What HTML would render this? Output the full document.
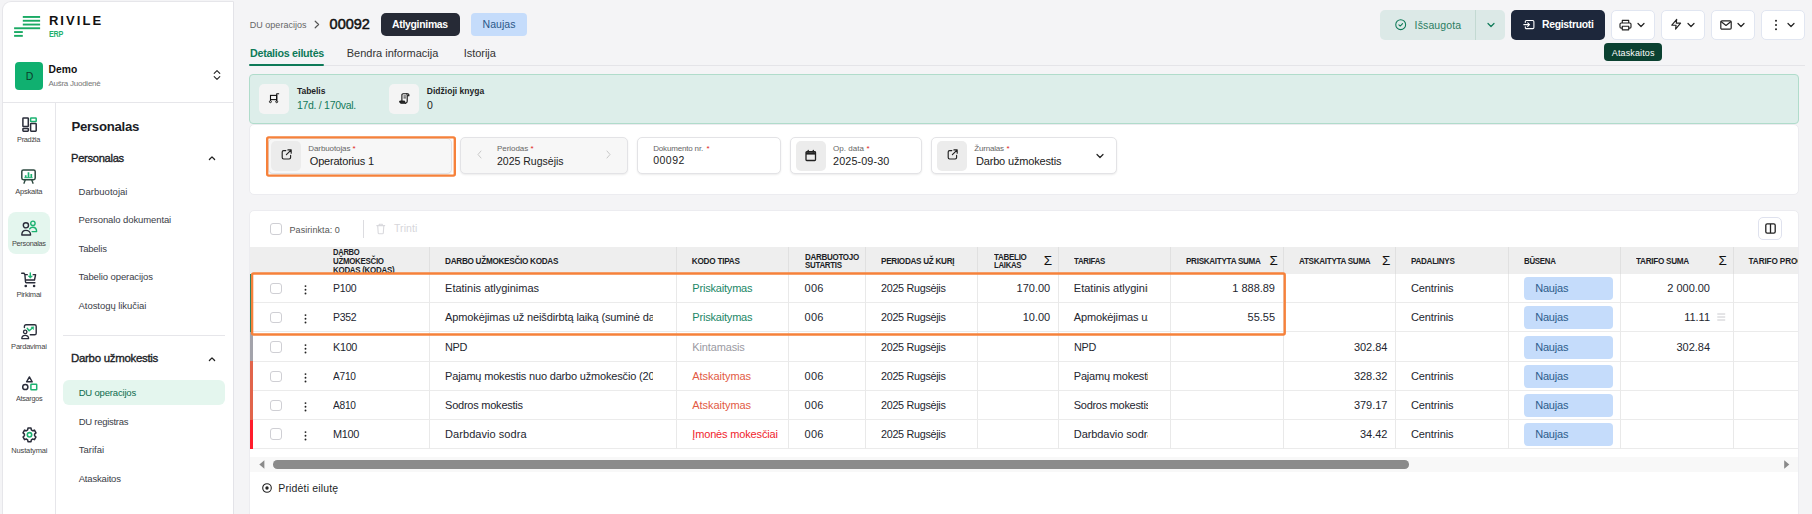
<!DOCTYPE html>
<html lang="lt">
<head>
<meta charset="utf-8">
<title>RIVILE ERP – DU operacijos 00092</title>
<style>
*{box-sizing:border-box;margin:0;padding:0}
html,body{width:1812px;height:514px;overflow:hidden}
body{background:#f4f4f6;font-family:"Liberation Sans",sans-serif;position:relative;color:#222}
body *{position:absolute;white-space:nowrap}
svg{overflow:visible}

.sb{background:#fff;border:1px solid #e6e6ea;border-right:1px solid #e3e3e8;border-radius:9px 0 0 0}
.hl{background:#e6e6ea}
.panel{background:#fff;border:1px solid #ececf0;border-radius:5px}
.fld{background:#fff;border:1px solid #e3e3e6;border-radius:5px;box-shadow:0 1px 2px rgba(0,0,0,.08)}
.ib{background:#ececec;border-radius:5px}
.btn{border-radius:5px}
.wbtn{background:#fff;border:1px solid #e6e6ec;border-radius:5px}
.badge{background:#c5dcfb;border-radius:4px}
.cb{background:#fff;border:1px solid #cfcfd4;border-radius:3px}
.vl{background:#e9e9e9}
.rl{background:#ebebeb}

</style>
</head>
<body>
<aside style="left:0;top:0;width:234px;height:514px">
<div class="sb" style="left:2.0px;top:1.0px;width:232.0px;height:519.0px;"></div>
<svg style="left:0.0px;top:0.0px;" width="60" height="40" viewBox="0 0 60 40" fill="none"><rect x="22.8" y="16.0" width="17.3" height="1.9" fill="#1aaa64"/><rect x="22.8" y="19.8" width="17.3" height="1.9" fill="#1aaa64"/><rect x="22.8" y="23.6" width="17.3" height="1.9" fill="#1aaa64"/><rect x="14.1" y="27.3" width="26.0" height="1.9" fill="#1aaa64"/><rect x="14.1" y="31.1" width="8.7" height="1.9" fill="#1aaa64"/><rect x="14.1" y="34.9" width="8.7" height="1.9" fill="#1aaa64"/></svg>
<span style="left:48.9px;top:13px;font-size:13px;line-height:16px;letter-spacing:2.08px;color:#111;font-weight:700;">RIVILE</span>
<span style="left:48.9px;top:29px;font-size:9px;line-height:11px;letter-spacing:-0.30px;color:#22b06e;font-weight:700;transform:scaleX(0.799);transform-origin:0 50%;">ERP</span>
<div style="left:15.0px;top:62.2px;width:28.1px;height:27.8px;background:#10b070;border-radius:4px"></div>
<span style="left:25.7px;top:70px;font-size:10.5px;line-height:13px;letter-spacing:-0.88px;color:#0b3d2b;">D</span>
<span style="left:48.4px;top:64px;font-size:10.3px;line-height:12px;letter-spacing:0.06px;color:#111;font-weight:700;">Demo</span>
<span style="left:48.4px;top:79px;font-size:8px;line-height:10px;letter-spacing:-0.25px;color:#777;">Aušra Juodienė</span>
<svg style="left:213.0px;top:69.0px;" width="8" height="12" viewBox="0 0 8 12" fill="none"><path d="M1.2 4.3 4 1.6l2.8 2.7M1.2 7.7 4 10.4l2.8-2.7" stroke="#222" stroke-width="1.1" stroke-linecap="round" stroke-linejoin="round"/></svg>
<div class="hl" style="left:3.0px;top:102.0px;width:230.0px;height:1.0px;"></div>
<div class="hl" style="left:55.3px;top:103.0px;width:1.0px;height:411.0px;"></div>
<svg style="left:21.5px;top:116.5px;" width="15" height="15" viewBox="0 0 15 15" fill="none"><rect x=".9" y=".9" width="5.4" height="8.6" rx=".6" stroke="#2a2d3a" stroke-width="1.5"/><rect x="8.6" y=".9" width="5.6" height="3.6" rx=".6" stroke="#1cb271" stroke-width="1.5"/><rect x=".9" y="11.4" width="5.4" height="2.8" rx=".6" stroke="#2a2d3a" stroke-width="1.5"/><rect x="8.6" y="6.6" width="5.6" height="7.6" rx=".6" stroke="#2a2d3a" stroke-width="1.5"/></svg>
<span style="left:17.4px;top:135px;font-size:7.5px;line-height:9px;letter-spacing:-0.30px;color:#444;transform:scaleX(0.986);transform-origin:0 50%;">Pradžia</span>
<svg style="left:21.3px;top:168.5px;" width="15" height="15" viewBox="0 0 15 15" fill="none"><rect x=".8" y=".9" width="13.4" height="9.8" rx="1.6" stroke="#2d4a40" stroke-width="1.5"/><path d="M4.2 11 3 14.2M10.8 11 12 14.2" stroke="#2d4a40" stroke-width="1.4" stroke-linecap="round"/><path d="M4.7 8.6V6.2M7.5 8.6V3.2M10.3 8.6V5" stroke="#1cb271" stroke-width="1.7"/><path d="M3.4 8.7h8.2" stroke="#1cb271" stroke-width="1"/></svg>
<span style="left:15.3px;top:187px;font-size:7.5px;line-height:9px;letter-spacing:-0.22px;color:#444;">Apskaita</span>
<div style="left:7.9px;top:211.9px;width:42.3px;height:42.3px;background:#e4f6ee;border-radius:8px"></div>
<svg style="left:21.0px;top:220.0px;" width="17" height="16" viewBox="0 0 17 16" fill="none"><circle cx="4.9" cy="5.3" r="2.6" stroke="#2a2d3a" stroke-width="1.4"/><path d="M.8 15c0-3 1.7-4.6 4.1-4.6S9.6 12 9.6 15z" stroke="#2a2d3a" stroke-width="1.4" stroke-linejoin="round"/><circle cx="11.9" cy="3.3" r="2.2" stroke="#1cb271" stroke-width="1.4"/><path d="M8.7 8.9c.7-1 1.7-1.6 3-1.6 2.3 0 3.9 1.6 3.9 4.3h-4.5" stroke="#1cb271" stroke-width="1.4" stroke-linejoin="round" stroke-linecap="round"/></svg>
<span style="left:12.0px;top:239px;font-size:7.5px;line-height:9px;letter-spacing:-0.30px;color:#444;transform:scaleX(0.976);transform-origin:0 50%;">Personalas</span>
<svg style="left:21.2px;top:272.0px;" width="16" height="15.5" viewBox="0 0 16 15.5" fill="none"><path d="M.7 1.25h2.3l.9 1.4.6 7.2c0 .5.4.9.9.9h8.5M3.9 2.65h2.4M12.2 2.65h2.4L13.5 8H4.6" stroke="#2a2d3a" stroke-width="1.4" stroke-linecap="round" stroke-linejoin="round"/><circle cx="4.75" cy="14" r="1.3" fill="#2a2d3a"/><circle cx="13.1" cy="14" r="1.3" fill="#2a2d3a"/><path d="M9.3 .9v3.4" stroke="#1cb271" stroke-width="1.4" stroke-linecap="round"/><path d="M7.1 3.9h4.4L9.3 6.3z" fill="#1cb271" stroke="#1cb271" stroke-width=".5" stroke-linejoin="round"/></svg>
<span style="left:16.4px;top:290px;font-size:7.5px;line-height:9px;letter-spacing:-0.22px;color:#444;">Pirkimai</span>
<svg style="left:21.2px;top:323.9px;" width="16" height="15.5" viewBox="0 0 16 15.5" fill="none"><path d="M3.4 3.6V2.4c0-.9.7-1.6 1.6-1.6h8.6c.9 0 1.6.7 1.6 1.6v6.8c0 .9-.7 1.6-1.6 1.6H9.3" stroke="#2a2d3a" stroke-width="1.4" stroke-linecap="round"/><circle cx="4.2" cy="7.9" r="1.7" stroke="#2a2d3a" stroke-width="1.3"/><path d="M.8 14.6c0-2 1.4-3.2 3.4-3.2s3.4 1.2 3.4 3.2z" stroke="#2a2d3a" stroke-width="1.3" stroke-linejoin="round"/><path d="M6.2 4.3 8.2 6.8 11.4 4" stroke="#1cb271" stroke-width="1.4" stroke-linecap="round" stroke-linejoin="round"/><path d="M9.9 3 12.8 2.7 12.5 5.7z" fill="#1cb271" stroke="#1cb271" stroke-width=".4" stroke-linejoin="round"/></svg>
<span style="left:11.1px;top:342px;font-size:7.5px;line-height:9px;letter-spacing:-0.20px;color:#444;">Pardavimai</span>
<svg style="left:21.6px;top:376.2px;" width="15.5" height="14.5" viewBox="0 0 15.5 14.5" fill="none"><path d="M7.4.9 10.2 5.8H4.6z" stroke="#2a2d3a" stroke-width="1.4" stroke-linejoin="round"/><circle cx="3.3" cy="11" r="2.6" stroke="#2a2d3a" stroke-width="1.5"/><rect x="8.9" y="8.2" width="5.8" height="5.6" rx=".5" stroke="#1cb271" stroke-width="1.5"/></svg>
<span style="left:15.7px;top:394px;font-size:7.5px;line-height:9px;letter-spacing:-0.30px;color:#444;transform:scaleX(0.967);transform-origin:0 50%;">Atsargos</span>
<svg style="left:21.6px;top:427.2px;" width="15" height="15.8" viewBox="0 0 15 15.8" fill="none"><path d="M9.03 1.08 L5.97 1.08 L5.66 2.95 L4.26 3.78 L2.53 3.13 L1.01 5.85 L2.42 7.07 L2.42 8.73 L1.01 9.95 L2.53 12.67 L4.26 12.02 L5.66 12.85 L5.97 14.72 L9.03 14.72 L9.34 12.85 L10.74 12.02 L12.47 12.67 L13.99 9.95 L12.58 8.73 L12.58 7.07 L13.99 5.85 L12.47 3.13 L10.74 3.78 L9.34 2.95Z" stroke="#2a2d3a" stroke-width="1.5" stroke-linejoin="round"/><circle cx="7.5" cy="7.8" r="2.2" stroke="#1cb271" stroke-width="1.6"/></svg>
<span style="left:11.2px;top:446px;font-size:7.5px;line-height:9px;letter-spacing:-0.13px;color:#444;">Nustatymai</span>
<h2 style="left:71.4px;top:119px;font-size:13.2px;line-height:16px;letter-spacing:-0.26px;color:#1b1d26;font-weight:700;">Personalas</h2>
<h3 style="left:71.4px;top:151px;font-size:11.8px;line-height:14px;letter-spacing:-0.30px;color:#1b1d26;transform:scaleX(0.943);transform-origin:0 50%;font-weight:400;-webkit-text-stroke:.35px #1b1d26;">Personalas</h3>
<svg style="left:208.2px;top:154.6px;" width="8" height="6" viewBox="0 0 8 6" fill="none"><path d="M1.4 4.5 4 1.9l2.6 2.6" stroke="#222" stroke-width="1.3" stroke-linecap="round" stroke-linejoin="round"/></svg>
<a style="left:78.6px;top:186px;font-size:9.5px;line-height:11px;letter-spacing:0.03px;color:#3a3d47;">Darbuotojai</a>
<a style="left:78.6px;top:214px;font-size:9.5px;line-height:11px;letter-spacing:-0.10px;color:#3a3d47;">Personalo dokumentai</a>
<a style="left:78.6px;top:243px;font-size:9.5px;line-height:11px;letter-spacing:-0.21px;color:#3a3d47;">Tabelis</a>
<a style="left:78.6px;top:271px;font-size:9.5px;line-height:11px;letter-spacing:-0.10px;color:#3a3d47;">Tabelio operacijos</a>
<a style="left:78.6px;top:300px;font-size:9.5px;line-height:11px;letter-spacing:-0.06px;color:#3a3d47;">Atostogų likučiai</a>
<div class="hl" style="left:63.0px;top:335.3px;width:162.0px;height:1.0px;"></div>
<h3 style="left:71.4px;top:351px;font-size:11.8px;line-height:14px;letter-spacing:-0.30px;color:#1b1d26;transform:scaleX(0.971);transform-origin:0 50%;font-weight:400;-webkit-text-stroke:.35px #1b1d26;">Darbo užmokestis</h3>
<svg style="left:208.2px;top:355.8px;" width="8" height="6" viewBox="0 0 8 6" fill="none"><path d="M1.4 4.5 4 1.9l2.6 2.6" stroke="#222" stroke-width="1.3" stroke-linecap="round" stroke-linejoin="round"/></svg>
<div style="left:63.0px;top:380.3px;width:162.1px;height:24.3px;background:#e4f6ee;border-radius:6px"></div>
<a style="left:78.7px;top:387px;font-size:9.5px;line-height:11px;letter-spacing:-0.18px;color:#0d6b4d;">DU operacijos</a>
<a style="left:78.7px;top:416px;font-size:9.5px;line-height:11px;letter-spacing:-0.27px;color:#3a3d47;">DU registras</a>
<a style="left:78.7px;top:444px;font-size:9.5px;line-height:11px;letter-spacing:0.01px;color:#3a3d47;">Tarifai</a>
<a style="left:78.7px;top:473px;font-size:9.5px;line-height:11px;letter-spacing:-0.17px;color:#3a3d47;">Ataskaitos</a>
</aside>
<main style="left:0;top:0;width:0;height:0">
<header style="left:0;top:0;width:0;height:0">
<a style="left:249.7px;top:20px;font-size:9px;line-height:11px;letter-spacing:0.03px;color:#666;">DU operacijos</a>
<svg style="left:314.2px;top:20.2px;" width="6" height="9" viewBox="0 0 6 9" fill="none"><path d="M1.2 1.2 4.6 4.5 1.2 7.8" stroke="#555" stroke-width="1.2" stroke-linecap="round" stroke-linejoin="round"/></svg>
<h1 style="left:329.6px;top:16px;font-size:14.5px;line-height:17px;letter-spacing:-0.03px;color:#111;font-weight:400;-webkit-text-stroke:.5px #111;">00092</h1>
<div class="btn" style="left:381.0px;top:13.2px;width:79.0px;height:22.6px;background:#262a36;border-radius:5px"></div>
<span style="left:392.4px;top:18px;font-size:10.5px;line-height:13px;letter-spacing:-0.30px;color:#fff;font-weight:700;transform:scaleX(0.994);transform-origin:0 50%;">Atlyginimas</span>
<div class="badge" style="left:471.0px;top:13.2px;width:56.0px;height:22.6px;"></div>
<span style="left:482.6px;top:18px;font-size:10.5px;line-height:13px;letter-spacing:0.02px;color:#2a5888;">Naujas</span>
<a style="left:249.7px;top:47px;font-size:11px;line-height:13px;letter-spacing:-0.30px;color:#0e7a58;font-weight:700;transform:scaleX(0.975);transform-origin:0 50%;">Detalios eilutės</a>
<div style="left:249.2px;top:63.6px;width:74.8px;height:2.3px;background:#0e7a58;border-radius:1px"></div>
<a style="left:346.8px;top:47px;font-size:11px;line-height:13px;letter-spacing:-0.01px;color:#333;">Bendra informacija</a>
<a style="left:463.7px;top:47px;font-size:11px;line-height:13px;letter-spacing:-0.04px;color:#333;">Istorija</a>
<div style="left:324.0px;top:65.0px;width:1480.5px;height:1.0px;background:#e4e4e8"></div>
<div class="btn" style="left:1380.2px;top:10.2px;width:124.7px;height:29.4px;background:#dce9e7;border-radius:5px"></div>
<div style="left:1475.0px;top:10.2px;width:1.0px;height:29.4px;background:#c3d9d2"></div>
<svg style="left:1395.4px;top:19.3px;" width="11.4" height="11.4" viewBox="0 0 12 12" fill="none"><circle cx="6" cy="6" r="5.2" stroke="#0e7a58" stroke-width="1.1"/><path d="M4.1 6.1 5.5 7.4 8 4.8" stroke="#0e7a58" stroke-width="1.1" stroke-linecap="round" stroke-linejoin="round"/></svg>
<span style="left:1414.6px;top:19px;font-size:10.5px;line-height:13px;letter-spacing:0.13px;color:#2b7d62;">Išsaugota</span>
<svg style="left:1486.8px;top:22.2px;" width="8" height="6" viewBox="0 0 8 6" fill="none"><path d="M1 1.5 4 4.5l3-3" stroke="#0e7a58" stroke-width="1.2" stroke-linecap="round" stroke-linejoin="round"/></svg>
<div class="btn" style="left:1511.0px;top:10.0px;width:94.0px;height:29.8px;background:#1d273b;border-radius:5px"></div>
<svg style="left:1523.0px;top:19.0px;" width="12" height="11" viewBox="0 0 12 11" fill="none"><path d="M2.3 3.4V2.7c0-.7.5-1.2 1.2-1.2h6.2c.7 0 1.2.5 1.2 1.2v5.7c0 .7-.5 1.2-1.2 1.2H3.5c-.7 0-1.2-.5-1.2-1.2v-.7" stroke="#fff" stroke-width="1.1" stroke-linecap="round" stroke-linejoin="round"/><path d="M.8 5.6h5.6M4.7 3.8l1.8 1.8-1.8 1.8" stroke="#fff" stroke-width="1.1" stroke-linecap="round" stroke-linejoin="round"/></svg>
<span style="left:1541.5px;top:18px;font-size:10.5px;line-height:13px;letter-spacing:-0.30px;color:#fff;font-weight:700;transform:scaleX(0.990);transform-origin:0 50%;">Registruoti</span>
<div class="wbtn" style="left:1611.0px;top:10.0px;width:44.0px;height:30.0px;border-color:#e1e6f1"></div>
<div class="wbtn" style="left:1661.0px;top:10.0px;width:44.0px;height:30.0px;border-color:#e1e6f1"></div>
<div class="wbtn" style="left:1711.0px;top:10.0px;width:44.0px;height:30.0px;border-color:#e1e6f1"></div>
<div class="wbtn" style="left:1761.0px;top:10.0px;width:44.0px;height:30.0px;border-color:#e1e6f1"></div>
<svg style="left:1619.2px;top:18.8px;" width="13" height="12" viewBox="0 0 13 12" fill="none"><path d="M3.3 4V1.3h6.4V4M3.3 9.1H2.2c-.7 0-1.2-.5-1.2-1.2V5.2C1 4.5 1.5 4 2.2 4h8.6c.7 0 1.2.5 1.2 1.2v2.7c0 .7-.5 1.2-1.2 1.2H9.7M3.3 7.2h6.4v3.6H3.3z" stroke="#222" stroke-width="1.15" stroke-linejoin="round"/></svg>
<svg style="left:1637.3px;top:22.0px;" width="8" height="6" viewBox="0 0 8 6" fill="none"><path d="M1 1.5 4 4.5l3-3" stroke="#222" stroke-width="1.2" stroke-linecap="round" stroke-linejoin="round"/></svg>
<svg style="left:1669.6px;top:18.0px;" width="12.4" height="12.4" viewBox="0 0 24 24" fill="none"><path d="M13 2.5 3.5 14h8.3l-1 7.5L20.5 10h-8.3z" stroke="#222" stroke-width="2.2" stroke-linejoin="round"/></svg>
<svg style="left:1687.2px;top:22.0px;" width="8" height="6" viewBox="0 0 8 6" fill="none"><path d="M1 1.5 4 4.5l3-3" stroke="#222" stroke-width="1.2" stroke-linecap="round" stroke-linejoin="round"/></svg>
<svg style="left:1719.5px;top:19.6px;" width="12" height="10" viewBox="0 0 12 10" fill="none"><rect x=".8" y=".8" width="10.4" height="8.4" rx="1.2" stroke="#222" stroke-width="1.2"/><path d="M1 1.6 6 5.4l5-3.8" stroke="#222" stroke-width="1.2" stroke-linejoin="round"/></svg>
<svg style="left:1737.2px;top:22.0px;" width="8" height="6" viewBox="0 0 8 6" fill="none"><path d="M1 1.5 4 4.5l3-3" stroke="#222" stroke-width="1.2" stroke-linecap="round" stroke-linejoin="round"/></svg>
<svg style="left:1774.2px;top:18.6px;" width="4" height="12" viewBox="0 0 4 12" fill="none"><circle cx="2" cy="1.8" r="1" fill="#222"/><circle cx="2" cy="6" r="1" fill="#222"/><circle cx="2" cy="10.2" r="1" fill="#222"/></svg>
<svg style="left:1787.2px;top:22.0px;" width="8" height="6" viewBox="0 0 8 6" fill="none"><path d="M1 1.5 4 4.5l3-3" stroke="#222" stroke-width="1.2" stroke-linecap="round" stroke-linejoin="round"/></svg>
<div style="left:1604.1px;top:43.2px;width:57.9px;height:17.6px;background:#0b4131;border-radius:4px"></div>
<span style="left:1611.8px;top:48px;font-size:9px;line-height:11px;letter-spacing:0.12px;color:#fff;">Ataskaitos</span>
</header>
<section style="left:0;top:0;width:0;height:0">
<div style="left:249.0px;top:74.0px;width:1550.0px;height:50.0px;background:#ddeeea;border:1px solid #b0dccb;border-radius:4px"></div>
<div style="left:259.3px;top:84.0px;width:29.7px;height:29.7px;background:#f4f4f4;border-radius:5px"></div>
<div style="left:389.0px;top:84.0px;width:30.0px;height:29.7px;background:#f4f4f4;border-radius:5px"></div>
<svg style="left:269.2px;top:93.0px;" width="10" height="10" viewBox="0 0 10 10" fill="none"><path d="M9.7.7H7.7v7" stroke="#111" stroke-width="1.1" stroke-linecap="round" stroke-linejoin="round"/><rect x="1.5" y="2.4" width="6.2" height="4.2" stroke="#111" stroke-width="1.1"/><path d="M1.5 6.6v1.2" stroke="#111" stroke-width="1.1"/><circle cx="1.4" cy="8.7" r="1" stroke="#111" stroke-width=".9"/><circle cx="7.7" cy="8.7" r="1" stroke="#111" stroke-width=".9"/></svg>
<svg style="left:399.0px;top:92.8px;" width="10.4" height="11" viewBox="0 0 10.4 11" fill="none"><path d="M2.9 8V1.9C2.9 1.2 3.4.7 4.1.7h4.6c.7 0 1.2.5 1.2 1.1v.9H8.2v5.6c0 1-.6 1.9-1.7 1.9" stroke="#111" stroke-width="1.1" stroke-linejoin="round" stroke-linecap="round"/><path d="M.7 8.1h5v.7c0 .8.3 1.4.9 1.4H2c-.8 0-1.3-.6-1.3-1.4z" fill="#333" stroke="#111" stroke-width="1" stroke-linejoin="round"/><path d="M4.5 3h2.4M4.5 4.9h2.4" stroke="#111" stroke-width=".9"/><path d="M8.2 2.7V1.9c0-.5-.3-1-.8-1.1" stroke="#111" stroke-width="1"/></svg>
<span style="left:297.0px;top:86px;font-size:8.5px;line-height:10px;letter-spacing:-0.04px;color:#1d1f27;font-weight:700;">Tabelis</span>
<span style="left:297.0px;top:99px;font-size:10.5px;line-height:13px;letter-spacing:-0.30px;color:#137a5a;">17d. / 170val.</span>
<span style="left:426.8px;top:86px;font-size:8.5px;line-height:10px;letter-spacing:0.02px;color:#1d1f27;font-weight:700;">Didžioji knyga</span>
<span style="left:427.0px;top:99px;font-size:10.5px;line-height:13px;letter-spacing:0.16px;color:#222;">0</span>
</section>
<form style="left:0;top:0;width:0;height:0">
<div class="panel" style="left:249.0px;top:124.0px;width:1550.0px;height:71.0px;"></div>
<div class="fld" style="left:268.2px;top:138.0px;width:184.1px;height:36.0px;background:#f7f7f7"></div>
<svg style="left:0;top:0" width="1812" height="514"><rect x="267.2" y="137.4" width="187.6" height="38.2" rx="1.5" fill="none" stroke="#f6813a" stroke-width="2.4"/></svg>
<div class="ib" style="left:271.3px;top:141.0px;width:29.5px;height:29.8px;"></div>
<svg style="left:280.5px;top:148.8px;" width="11" height="11" viewBox="0 0 11 11" fill="none"><path d="M4.8 1.6H2.6c-.8 0-1.4.6-1.4 1.4v5.6c0 .8.6 1.4 1.4 1.4h5.6c.8 0 1.4-.6 1.4-1.4V6.4" stroke="#222" stroke-width="1.15" stroke-linecap="round" stroke-linejoin="round"/><path d="M6.9.9h3.3v3.3M10 1.1 5.4 5.7" stroke="#222" stroke-width="1.15" stroke-linecap="round" stroke-linejoin="round"/></svg>
<label style="left:308.3px;top:144px;font-size:8px;line-height:10px;letter-spacing:-0.10px;color:#666;">Darbuotojas</label>
<span style="left:352.4px;top:144px;font-size:8px;line-height:10px;letter-spacing:-0.31px;color:#e02424;">*</span>
<span style="left:309.8px;top:155px;font-size:11px;line-height:13px;letter-spacing:-0.20px;color:#222;">Operatorius 1</span>
<div class="fld" style="left:460.2px;top:137.0px;width:167.6px;height:36.8px;background:#f7f7f7"></div>
<svg style="left:476.6px;top:150.3px;" width="5" height="9" viewBox="0 0 5 9" fill="none"><path d="M4 1 1 4.5 4 8" stroke="#c9c9c9" stroke-width="1" stroke-linecap="round" stroke-linejoin="round"/></svg>
<svg style="left:606.4px;top:150.3px;" width="5" height="9" viewBox="0 0 5 9" fill="none"><path d="M1 1 4 4.5 1 8" stroke="#c9c9c9" stroke-width="1" stroke-linecap="round" stroke-linejoin="round"/></svg>
<label style="left:497.0px;top:144px;font-size:8px;line-height:10px;letter-spacing:-0.05px;color:#666;">Periodas</label>
<span style="left:530.4px;top:144px;font-size:8px;line-height:10px;letter-spacing:-0.31px;color:#e02424;">*</span>
<span style="left:497.0px;top:155px;font-size:10.5px;line-height:13px;letter-spacing:0.00px;color:#222;">2025 Rugsėjis</span>
<div class="fld" style="left:637.4px;top:137.0px;width:143.4px;height:36.8px;"></div>
<label style="left:653.2px;top:144px;font-size:8px;line-height:10px;letter-spacing:-0.17px;color:#666;">Dokumento nr.</label>
<span style="left:706.4px;top:144px;font-size:8px;line-height:10px;letter-spacing:-0.31px;color:#e02424;">*</span>
<span style="left:653.2px;top:154px;font-size:10.5px;line-height:13px;letter-spacing:0.48px;color:#222;">00092</span>
<div class="fld" style="left:790.2px;top:137.0px;width:131.4px;height:36.8px;"></div>
<div class="ib" style="left:795.8px;top:141.0px;width:30.2px;height:30.0px;"></div>
<svg style="left:805.2px;top:149.8px;" width="11.5" height="11.5" viewBox="0 0 11.5 11.5" fill="none"><rect x="1" y="1.7" width="9.5" height="8.8" rx=".8" stroke="#222" stroke-width="1.3"/><path d="M1 2.2h9.5v2.4H1z" fill="#222"/><path d="M3.2.4v1.6M8.3.4v1.6" stroke="#222" stroke-width="1.4" stroke-linecap="round"/></svg>
<label style="left:833.1px;top:144px;font-size:8px;line-height:10px;letter-spacing:0.03px;color:#666;">Op. data</label>
<span style="left:866.4px;top:144px;font-size:8px;line-height:10px;letter-spacing:-0.31px;color:#e02424;">*</span>
<span style="left:833.1px;top:155px;font-size:10.8px;line-height:13px;letter-spacing:0.11px;color:#222;">2025-09-30</span>
<div class="fld" style="left:931.2px;top:137.0px;width:185.4px;height:36.8px;"></div>
<div class="ib" style="left:937.0px;top:141.0px;width:30.0px;height:30.0px;"></div>
<svg style="left:946.5px;top:149.0px;" width="11" height="11" viewBox="0 0 11 11" fill="none"><path d="M4.8 1.6H2.6c-.8 0-1.4.6-1.4 1.4v5.6c0 .8.6 1.4 1.4 1.4h5.6c.8 0 1.4-.6 1.4-1.4V6.4" stroke="#222" stroke-width="1.15" stroke-linecap="round" stroke-linejoin="round"/><path d="M6.9.9h3.3v3.3M10 1.1 5.4 5.7" stroke="#222" stroke-width="1.15" stroke-linecap="round" stroke-linejoin="round"/></svg>
<label style="left:974.3px;top:144px;font-size:8px;line-height:10px;letter-spacing:-0.20px;color:#666;">Žurnalas</label>
<span style="left:1006.4px;top:144px;font-size:8px;line-height:10px;letter-spacing:-0.31px;color:#e02424;">*</span>
<span style="left:975.9px;top:155px;font-size:11px;line-height:13px;letter-spacing:-0.16px;color:#222;">Darbo užmokestis</span>
<svg style="left:1095.7px;top:152.6px;" width="8" height="6" viewBox="0 0 8 6" fill="none"><path d="M1 1.5 4 4.5l3-3" stroke="#222" stroke-width="1.2" stroke-linecap="round" stroke-linejoin="round"/></svg>
</form>
<section style="left:0;top:0;width:0;height:0">
<div class="panel" style="left:249.2px;top:210.2px;width:1549.6px;height:319.8px;"></div>
<div class="cb" style="left:270.3px;top:223.3px;width:11.5px;height:11.5px;"></div>
<span style="left:289.5px;top:225px;font-size:9px;line-height:11px;letter-spacing:0.07px;color:#555;">Pasirinkta: 0</span>
<div style="left:363.0px;top:220.4px;width:1.0px;height:17.6px;background:#dcdce0"></div>
<svg style="left:376.4px;top:222.6px;" width="9.5" height="11.5" viewBox="0 0 9.5 11.5" fill="none"><path d="M.8 2.6h7.9M3.2 2.4V1.2h3.1v1.2M1.7 2.8l.5 7.2c0 .5.4.8.9.8h3.3c.5 0 .9-.3.9-.8l.5-7.2" stroke="#d9d9dd" stroke-width="1.1" stroke-linecap="round" stroke-linejoin="round"/></svg>
<span style="left:394.0px;top:222px;font-size:10.5px;line-height:13px;letter-spacing:0.07px;color:#d6d6da;">Trinti</span>
<div class="wbtn" style="left:1758.3px;top:217.0px;width:23.5px;height:23.4px;border-color:#dfe2ee"></div>
<svg style="left:1764.6px;top:223.4px;" width="11" height="11" viewBox="0 0 11 11" fill="none"><rect x=".8" y=".8" width="9.4" height="9.4" rx="1.4" stroke="#222" stroke-width="1.3"/><path d="M5.5 1v9" stroke="#222" stroke-width="1.3"/></svg>
<div style="left:250.0px;top:247.0px;width:1548.0px;height:26.5px;background:#eeeeee"></div>
<div style="left:428.7px;top:247.0px;width:1.0px;height:26.5px;background:#e0e0e0"></div>
<div style="left:676.1px;top:247.0px;width:1.0px;height:26.5px;background:#e0e0e0"></div>
<div style="left:787.9px;top:247.0px;width:1.0px;height:26.5px;background:#e0e0e0"></div>
<div style="left:864.9px;top:247.0px;width:1.0px;height:26.5px;background:#e0e0e0"></div>
<div style="left:976.9px;top:247.0px;width:1.0px;height:26.5px;background:#e0e0e0"></div>
<div style="left:1058.1px;top:247.0px;width:1.0px;height:26.5px;background:#e0e0e0"></div>
<div style="left:1169.9px;top:247.0px;width:1.0px;height:26.5px;background:#e0e0e0"></div>
<div style="left:1282.9px;top:247.0px;width:1.0px;height:26.5px;background:#e0e0e0"></div>
<div style="left:1394.9px;top:247.0px;width:1.0px;height:26.5px;background:#e0e0e0"></div>
<div style="left:1508.0px;top:247.0px;width:1.0px;height:26.5px;background:#e0e0e0"></div>
<div style="left:1619.8px;top:247.0px;width:1.0px;height:26.5px;background:#e0e0e0"></div>
<div style="left:1732.9px;top:247.0px;width:1.0px;height:26.5px;background:#e0e0e0"></div>
<div style="left:330px;top:247.0px;width:99px;height:26.5px;overflow:hidden">
<span style="left:2.6px;top:1px;font-size:8.2px;line-height:10px;letter-spacing:-0.30px;color:#1d1f27;font-weight:700;transform:scaleX(0.926);transform-origin:0 50%;">DARBO</span>
<span style="left:2.6px;top:10px;font-size:8.2px;line-height:10px;letter-spacing:-0.30px;color:#1d1f27;font-weight:700;transform:scaleX(0.966);transform-origin:0 50%;">UŽMOKESČIO</span>
<span style="left:2.6px;top:19px;font-size:8.2px;line-height:10px;letter-spacing:-0.30px;color:#1d1f27;font-weight:700;transform:scaleX(0.974);transform-origin:0 50%;">KODAS (KODAS)</span>
</div>
<span style="left:445.1px;top:257px;font-size:8.2px;line-height:10px;letter-spacing:-0.30px;color:#1d1f27;font-weight:700;transform:scaleX(1.000);transform-origin:0 50%;">DARBO UŽMOKESČIO KODAS</span>
<span style="left:691.8px;top:257px;font-size:8.2px;line-height:10px;letter-spacing:-0.24px;color:#1d1f27;font-weight:700;">KODO TIPAS</span>
<span style="left:804.5px;top:253px;font-size:8.2px;line-height:10px;letter-spacing:-0.30px;color:#1d1f27;font-weight:700;transform:scaleX(0.979);transform-origin:0 50%;">DARBUOTOJO</span>
<span style="left:804.5px;top:261px;font-size:8.2px;line-height:10px;letter-spacing:-0.30px;color:#1d1f27;font-weight:700;transform:scaleX(0.970);transform-origin:0 50%;">SUTARTIS</span>
<span style="left:880.8px;top:257px;font-size:8.2px;line-height:10px;letter-spacing:-0.30px;color:#1d1f27;font-weight:700;transform:scaleX(0.997);transform-origin:0 50%;">PERIODAS UŽ KURĮ</span>
<span style="left:993.5px;top:253px;font-size:8.2px;line-height:10px;letter-spacing:-0.30px;color:#1d1f27;font-weight:700;transform:scaleX(0.978);transform-origin:0 50%;">TABELIO</span>
<span style="left:993.5px;top:261px;font-size:8.2px;line-height:10px;letter-spacing:-0.30px;color:#1d1f27;font-weight:700;transform:scaleX(0.949);transform-origin:0 50%;">LAIKAS</span>
<span style="left:1073.8px;top:257px;font-size:8.2px;line-height:10px;letter-spacing:-0.30px;color:#1d1f27;font-weight:700;transform:scaleX(0.960);transform-origin:0 50%;">TARIFAS</span>
<span style="left:1186.1px;top:257px;font-size:8.2px;line-height:10px;letter-spacing:-0.30px;color:#1d1f27;font-weight:700;transform:scaleX(0.991);transform-origin:0 50%;">PRISKAITYTA SUMA</span>
<span style="left:1298.6px;top:257px;font-size:8.2px;line-height:10px;letter-spacing:-0.30px;color:#1d1f27;font-weight:700;transform:scaleX(0.989);transform-origin:0 50%;">ATSKAITYTA SUMA</span>
<span style="left:1411.0px;top:257px;font-size:8.2px;line-height:10px;letter-spacing:-0.30px;color:#1d1f27;font-weight:700;transform:scaleX(0.989);transform-origin:0 50%;">PADALINYS</span>
<span style="left:1523.5px;top:257px;font-size:8.2px;line-height:10px;letter-spacing:-0.30px;color:#1d1f27;font-weight:700;transform:scaleX(0.962);transform-origin:0 50%;">BŪSENA</span>
<span style="left:1636.3px;top:257px;font-size:8.2px;line-height:10px;letter-spacing:-0.30px;color:#1d1f27;font-weight:700;transform:scaleX(0.999);transform-origin:0 50%;">TARIFO SUMA</span>
<div style="left:1745px;top:247.0px;width:53px;height:26.5px;overflow:hidden">
<span style="left:3.6px;top:10px;font-size:8.2px;line-height:10px;letter-spacing:-0.13px;color:#1d1f27;font-weight:700;">TARIFO PROCENTAS</span>
</div>
<span style="left:1043.7px;top:253px;font-size:13.5px;line-height:16px;letter-spacing:0.25px;color:#111;font-family:"Liberation Serif","DejaVu Serif",serif;-webkit-text-stroke:.3px #111;">Σ</span>
<span style="left:1269.4px;top:253px;font-size:13.5px;line-height:16px;letter-spacing:0.25px;color:#111;font-family:"Liberation Serif","DejaVu Serif",serif;-webkit-text-stroke:.3px #111;">Σ</span>
<span style="left:1382.0px;top:253px;font-size:13.5px;line-height:16px;letter-spacing:0.25px;color:#111;font-family:"Liberation Serif","DejaVu Serif",serif;-webkit-text-stroke:.3px #111;">Σ</span>
<span style="left:1718.6px;top:253px;font-size:13.5px;line-height:16px;letter-spacing:0.25px;color:#111;font-family:"Liberation Serif","DejaVu Serif",serif;-webkit-text-stroke:.3px #111;">Σ</span>
<div style="left:250px;top:273.5px;width:1548px;height:29.2px">
</div>
<div class="rl" style="left:250.0px;top:302.2px;width:1548.0px;height:1.0px;"></div>
<div class="vl" style="left:428.7px;top:273.5px;width:1.0px;height:29.2px;"></div>
<div class="vl" style="left:676.1px;top:273.5px;width:1.0px;height:29.2px;"></div>
<div class="vl" style="left:787.9px;top:273.5px;width:1.0px;height:29.2px;"></div>
<div class="vl" style="left:864.9px;top:273.5px;width:1.0px;height:29.2px;"></div>
<div class="vl" style="left:976.9px;top:273.5px;width:1.0px;height:29.2px;"></div>
<div class="vl" style="left:1058.1px;top:273.5px;width:1.0px;height:29.2px;"></div>
<div class="vl" style="left:1169.9px;top:273.5px;width:1.0px;height:29.2px;"></div>
<div class="vl" style="left:1282.9px;top:273.5px;width:1.0px;height:29.2px;"></div>
<div class="vl" style="left:1394.9px;top:273.5px;width:1.0px;height:29.2px;"></div>
<div class="vl" style="left:1508.0px;top:273.5px;width:1.0px;height:29.2px;"></div>
<div class="vl" style="left:1619.8px;top:273.5px;width:1.0px;height:29.2px;"></div>
<div class="vl" style="left:1732.9px;top:273.5px;width:1.0px;height:29.2px;"></div>
<div style="left:249.8px;top:273.5px;width:3.0px;height:29.4px;background:#1c8262"></div>
<div class="cb" style="left:270.2px;top:282.6px;width:11.6px;height:11.6px;"></div>
<svg style="left:304.3px;top:284.9px;" width="3" height="10" viewBox="0 0 3 10" fill="none"><circle cx="1.5" cy="1.1" r=".95" fill="#222"/><circle cx="1.5" cy="4.8" r=".95" fill="#222"/><circle cx="1.5" cy="8.5" r=".95" fill="#222"/></svg>
<span style="left:332.6px;top:282px;font-size:11px;line-height:13px;letter-spacing:-0.30px;color:#23262f;transform:scaleX(0.952);transform-origin:0 50%;">P100</span>
<div style="left:440px;top:273px;width:212.6px;height:29px;overflow:hidden">
<span style="left:5.1px;top:9px;font-size:11px;line-height:13px;letter-spacing:-0.01px;color:#23262f;">Etatinis atlyginimas</span>
</div>
<span style="left:692.3px;top:282px;font-size:11px;line-height:13px;letter-spacing:-0.19px;color:#1b8767;">Priskaitymas</span>
<span style="left:804.5px;top:282px;font-size:11px;line-height:13px;letter-spacing:0.27px;color:#23262f;">006</span>
<span style="left:880.8px;top:282px;font-size:11px;line-height:13px;letter-spacing:-0.30px;color:#23262f;transform:scaleX(0.980);transform-origin:0 50%;">2025 Rugsėjis</span>
<span style="left:1016.6px;top:282px;font-size:11px;line-height:13px;letter-spacing:-0.02px;color:#23262f;">170.00</span>
<div style="left:1070px;top:273px;width:77.5px;height:29px;overflow:hidden">
<span style="left:3.8px;top:9px;font-size:11px;line-height:13px;letter-spacing:0.01px;color:#23262f;">Etatinis atlyginimas</span>
</div>
<span style="left:1232.3px;top:282px;font-size:11px;line-height:13px;letter-spacing:-0.02px;color:#23262f;">1 888.89</span>
<span style="left:1411.0px;top:282px;font-size:11px;line-height:13px;letter-spacing:-0.11px;color:#23262f;">Centrinis</span>
<div class="badge" style="left:1524.0px;top:277.0px;width:89.0px;height:22.8px;"></div>
<span style="left:1535.2px;top:282px;font-size:11px;line-height:13px;letter-spacing:-0.21px;color:#2d5d8c;">Naujas</span>
<span style="left:1667.3px;top:282px;font-size:11px;line-height:13px;letter-spacing:-0.02px;color:#23262f;">2 000.00</span>
<div style="left:250px;top:302.7px;width:1548px;height:29.2px">
</div>
<div class="rl" style="left:250.0px;top:331.4px;width:1548.0px;height:1.0px;"></div>
<div class="vl" style="left:428.7px;top:302.7px;width:1.0px;height:29.2px;"></div>
<div class="vl" style="left:676.1px;top:302.7px;width:1.0px;height:29.2px;"></div>
<div class="vl" style="left:787.9px;top:302.7px;width:1.0px;height:29.2px;"></div>
<div class="vl" style="left:864.9px;top:302.7px;width:1.0px;height:29.2px;"></div>
<div class="vl" style="left:976.9px;top:302.7px;width:1.0px;height:29.2px;"></div>
<div class="vl" style="left:1058.1px;top:302.7px;width:1.0px;height:29.2px;"></div>
<div class="vl" style="left:1169.9px;top:302.7px;width:1.0px;height:29.2px;"></div>
<div class="vl" style="left:1282.9px;top:302.7px;width:1.0px;height:29.2px;"></div>
<div class="vl" style="left:1394.9px;top:302.7px;width:1.0px;height:29.2px;"></div>
<div class="vl" style="left:1508.0px;top:302.7px;width:1.0px;height:29.2px;"></div>
<div class="vl" style="left:1619.8px;top:302.7px;width:1.0px;height:29.2px;"></div>
<div class="vl" style="left:1732.9px;top:302.7px;width:1.0px;height:29.2px;"></div>
<div style="left:249.8px;top:302.7px;width:3.0px;height:29.4px;background:#1c8262"></div>
<div class="cb" style="left:270.2px;top:311.8px;width:11.6px;height:11.6px;"></div>
<svg style="left:304.3px;top:314.1px;" width="3" height="10" viewBox="0 0 3 10" fill="none"><circle cx="1.5" cy="1.1" r=".95" fill="#222"/><circle cx="1.5" cy="4.8" r=".95" fill="#222"/><circle cx="1.5" cy="8.5" r=".95" fill="#222"/></svg>
<span style="left:332.6px;top:311px;font-size:11px;line-height:13px;letter-spacing:-0.30px;color:#23262f;transform:scaleX(0.952);transform-origin:0 50%;">P352</span>
<div style="left:440px;top:302px;width:212.6px;height:29px;overflow:hidden">
<span style="left:5.1px;top:9px;font-size:11px;line-height:13px;letter-spacing:-0.12px;color:#23262f;">Apmokėjimas už neišdirbtą laiką (suminė darbo dienų)</span>
</div>
<span style="left:692.3px;top:311px;font-size:11px;line-height:13px;letter-spacing:-0.19px;color:#1b8767;">Priskaitymas</span>
<span style="left:804.5px;top:311px;font-size:11px;line-height:13px;letter-spacing:0.27px;color:#23262f;">006</span>
<span style="left:880.8px;top:311px;font-size:11px;line-height:13px;letter-spacing:-0.30px;color:#23262f;transform:scaleX(0.980);transform-origin:0 50%;">2025 Rugsėjis</span>
<span style="left:1022.7px;top:311px;font-size:11px;line-height:13px;letter-spacing:-0.02px;color:#23262f;">10.00</span>
<div style="left:1070px;top:302px;width:77.5px;height:29px;overflow:hidden">
<span style="left:3.8px;top:9px;font-size:11px;line-height:13px;letter-spacing:-0.14px;color:#23262f;">Apmokėjimas už neišdirbtą laiką</span>
</div>
<span style="left:1247.6px;top:311px;font-size:11px;line-height:13px;letter-spacing:-0.02px;color:#23262f;">55.55</span>
<span style="left:1411.0px;top:311px;font-size:11px;line-height:13px;letter-spacing:-0.11px;color:#23262f;">Centrinis</span>
<div class="badge" style="left:1524.0px;top:306.2px;width:89.0px;height:22.8px;"></div>
<span style="left:1535.2px;top:311px;font-size:11px;line-height:13px;letter-spacing:-0.21px;color:#2d5d8c;">Naujas</span>
<span style="left:1684.2px;top:311px;font-size:11px;line-height:13px;letter-spacing:-0.02px;color:#23262f;">11.11</span>
<div style="left:250px;top:331.9px;width:1548px;height:29.2px">
</div>
<div class="rl" style="left:250.0px;top:360.6px;width:1548.0px;height:1.0px;"></div>
<div class="vl" style="left:428.7px;top:331.9px;width:1.0px;height:29.2px;"></div>
<div class="vl" style="left:676.1px;top:331.9px;width:1.0px;height:29.2px;"></div>
<div class="vl" style="left:787.9px;top:331.9px;width:1.0px;height:29.2px;"></div>
<div class="vl" style="left:864.9px;top:331.9px;width:1.0px;height:29.2px;"></div>
<div class="vl" style="left:976.9px;top:331.9px;width:1.0px;height:29.2px;"></div>
<div class="vl" style="left:1058.1px;top:331.9px;width:1.0px;height:29.2px;"></div>
<div class="vl" style="left:1169.9px;top:331.9px;width:1.0px;height:29.2px;"></div>
<div class="vl" style="left:1282.9px;top:331.9px;width:1.0px;height:29.2px;"></div>
<div class="vl" style="left:1394.9px;top:331.9px;width:1.0px;height:29.2px;"></div>
<div class="vl" style="left:1508.0px;top:331.9px;width:1.0px;height:29.2px;"></div>
<div class="vl" style="left:1619.8px;top:331.9px;width:1.0px;height:29.2px;"></div>
<div class="vl" style="left:1732.9px;top:331.9px;width:1.0px;height:29.2px;"></div>
<div style="left:249.8px;top:331.9px;width:3.0px;height:29.4px;background:#a3a3ab"></div>
<div class="cb" style="left:270.2px;top:341.4px;width:11.6px;height:11.6px;"></div>
<svg style="left:304.3px;top:343.7px;" width="3" height="10" viewBox="0 0 3 10" fill="none"><circle cx="1.5" cy="1.1" r=".95" fill="#222"/><circle cx="1.5" cy="4.8" r=".95" fill="#222"/><circle cx="1.5" cy="8.5" r=".95" fill="#222"/></svg>
<span style="left:332.6px;top:341px;font-size:11px;line-height:13px;letter-spacing:-0.30px;color:#23262f;transform:scaleX(0.984);transform-origin:0 50%;">K100</span>
<div style="left:440px;top:331px;width:212.6px;height:29px;overflow:hidden">
<span style="left:5.1px;top:10px;font-size:11px;line-height:13px;letter-spacing:-0.30px;color:#23262f;transform:scaleX(0.990);transform-origin:0 50%;">NPD</span>
</div>
<span style="left:692.3px;top:341px;font-size:11px;line-height:13px;letter-spacing:-0.14px;color:#9a9aa2;">Kintamasis</span>
<span style="left:880.8px;top:341px;font-size:11px;line-height:13px;letter-spacing:-0.30px;color:#23262f;transform:scaleX(0.980);transform-origin:0 50%;">2025 Rugsėjis</span>
<div style="left:1070px;top:331px;width:77.5px;height:29px;overflow:hidden">
<span style="left:3.8px;top:10px;font-size:11px;line-height:13px;letter-spacing:-0.30px;color:#23262f;transform:scaleX(0.981);transform-origin:0 50%;">NPD</span>
</div>
<span style="left:1353.9px;top:341px;font-size:11px;line-height:13px;letter-spacing:-0.02px;color:#23262f;">302.84</span>
<div class="badge" style="left:1524.0px;top:335.8px;width:89.0px;height:22.8px;"></div>
<span style="left:1535.2px;top:341px;font-size:11px;line-height:13px;letter-spacing:-0.21px;color:#2d5d8c;">Naujas</span>
<span style="left:1676.5px;top:341px;font-size:11px;line-height:13px;letter-spacing:-0.02px;color:#23262f;">302.84</span>
<div style="left:250px;top:361.1px;width:1548px;height:29.2px">
</div>
<div class="rl" style="left:250.0px;top:389.8px;width:1548.0px;height:1.0px;"></div>
<div class="vl" style="left:428.7px;top:361.1px;width:1.0px;height:29.2px;"></div>
<div class="vl" style="left:676.1px;top:361.1px;width:1.0px;height:29.2px;"></div>
<div class="vl" style="left:787.9px;top:361.1px;width:1.0px;height:29.2px;"></div>
<div class="vl" style="left:864.9px;top:361.1px;width:1.0px;height:29.2px;"></div>
<div class="vl" style="left:976.9px;top:361.1px;width:1.0px;height:29.2px;"></div>
<div class="vl" style="left:1058.1px;top:361.1px;width:1.0px;height:29.2px;"></div>
<div class="vl" style="left:1169.9px;top:361.1px;width:1.0px;height:29.2px;"></div>
<div class="vl" style="left:1282.9px;top:361.1px;width:1.0px;height:29.2px;"></div>
<div class="vl" style="left:1394.9px;top:361.1px;width:1.0px;height:29.2px;"></div>
<div class="vl" style="left:1508.0px;top:361.1px;width:1.0px;height:29.2px;"></div>
<div class="vl" style="left:1619.8px;top:361.1px;width:1.0px;height:29.2px;"></div>
<div class="vl" style="left:1732.9px;top:361.1px;width:1.0px;height:29.2px;"></div>
<div style="left:249.8px;top:361.1px;width:3.0px;height:29.4px;background:#e1644b"></div>
<div class="cb" style="left:270.2px;top:370.5px;width:11.6px;height:11.6px;"></div>
<svg style="left:304.3px;top:372.8px;" width="3" height="10" viewBox="0 0 3 10" fill="none"><circle cx="1.5" cy="1.1" r=".95" fill="#222"/><circle cx="1.5" cy="4.8" r=".95" fill="#222"/><circle cx="1.5" cy="8.5" r=".95" fill="#222"/></svg>
<span style="left:332.6px;top:370px;font-size:11px;line-height:13px;letter-spacing:-0.30px;color:#23262f;transform:scaleX(0.924);transform-origin:0 50%;">A710</span>
<div style="left:440px;top:361px;width:212.6px;height:29px;overflow:hidden">
<span style="left:5.1px;top:9px;font-size:11px;line-height:13px;letter-spacing:-0.18px;color:#23262f;">Pajamų mokestis nuo darbo užmokesčio (20%)</span>
</div>
<span style="left:692.3px;top:370px;font-size:11px;line-height:13px;letter-spacing:-0.05px;color:#e25a44;">Atskaitymas</span>
<span style="left:804.5px;top:370px;font-size:11px;line-height:13px;letter-spacing:0.27px;color:#23262f;">006</span>
<span style="left:880.8px;top:370px;font-size:11px;line-height:13px;letter-spacing:-0.30px;color:#23262f;transform:scaleX(0.980);transform-origin:0 50%;">2025 Rugsėjis</span>
<div style="left:1070px;top:361px;width:77.5px;height:29px;overflow:hidden">
<span style="left:3.8px;top:9px;font-size:11px;line-height:13px;letter-spacing:-0.20px;color:#23262f;">Pajamų mokestis</span>
</div>
<span style="left:1353.9px;top:370px;font-size:11px;line-height:13px;letter-spacing:-0.02px;color:#23262f;">328.32</span>
<span style="left:1411.0px;top:370px;font-size:11px;line-height:13px;letter-spacing:-0.11px;color:#23262f;">Centrinis</span>
<div class="badge" style="left:1524.0px;top:364.9px;width:89.0px;height:22.8px;"></div>
<span style="left:1535.2px;top:370px;font-size:11px;line-height:13px;letter-spacing:-0.21px;color:#2d5d8c;">Naujas</span>
<div style="left:250px;top:390.3px;width:1548px;height:29.2px">
</div>
<div class="rl" style="left:250.0px;top:419.0px;width:1548.0px;height:1.0px;"></div>
<div class="vl" style="left:428.7px;top:390.3px;width:1.0px;height:29.2px;"></div>
<div class="vl" style="left:676.1px;top:390.3px;width:1.0px;height:29.2px;"></div>
<div class="vl" style="left:787.9px;top:390.3px;width:1.0px;height:29.2px;"></div>
<div class="vl" style="left:864.9px;top:390.3px;width:1.0px;height:29.2px;"></div>
<div class="vl" style="left:976.9px;top:390.3px;width:1.0px;height:29.2px;"></div>
<div class="vl" style="left:1058.1px;top:390.3px;width:1.0px;height:29.2px;"></div>
<div class="vl" style="left:1169.9px;top:390.3px;width:1.0px;height:29.2px;"></div>
<div class="vl" style="left:1282.9px;top:390.3px;width:1.0px;height:29.2px;"></div>
<div class="vl" style="left:1394.9px;top:390.3px;width:1.0px;height:29.2px;"></div>
<div class="vl" style="left:1508.0px;top:390.3px;width:1.0px;height:29.2px;"></div>
<div class="vl" style="left:1619.8px;top:390.3px;width:1.0px;height:29.2px;"></div>
<div class="vl" style="left:1732.9px;top:390.3px;width:1.0px;height:29.2px;"></div>
<div style="left:249.8px;top:390.3px;width:3.0px;height:29.4px;background:#e1644b"></div>
<div class="cb" style="left:270.2px;top:399.6px;width:11.6px;height:11.6px;"></div>
<svg style="left:304.3px;top:401.9px;" width="3" height="10" viewBox="0 0 3 10" fill="none"><circle cx="1.5" cy="1.1" r=".95" fill="#222"/><circle cx="1.5" cy="4.8" r=".95" fill="#222"/><circle cx="1.5" cy="8.5" r=".95" fill="#222"/></svg>
<span style="left:332.6px;top:399px;font-size:11px;line-height:13px;letter-spacing:-0.30px;color:#23262f;transform:scaleX(0.924);transform-origin:0 50%;">A810</span>
<div style="left:440px;top:390px;width:212.6px;height:29px;overflow:hidden">
<span style="left:5.1px;top:9px;font-size:11px;line-height:13px;letter-spacing:-0.24px;color:#23262f;">Sodros mokestis</span>
</div>
<span style="left:692.3px;top:399px;font-size:11px;line-height:13px;letter-spacing:-0.05px;color:#e25a44;">Atskaitymas</span>
<span style="left:804.5px;top:399px;font-size:11px;line-height:13px;letter-spacing:0.27px;color:#23262f;">006</span>
<span style="left:880.8px;top:399px;font-size:11px;line-height:13px;letter-spacing:-0.30px;color:#23262f;transform:scaleX(0.980);transform-origin:0 50%;">2025 Rugsėjis</span>
<div style="left:1070px;top:390px;width:77.5px;height:29px;overflow:hidden">
<span style="left:3.8px;top:9px;font-size:11px;line-height:13px;letter-spacing:-0.29px;color:#23262f;">Sodros mokestis</span>
</div>
<span style="left:1353.9px;top:399px;font-size:11px;line-height:13px;letter-spacing:-0.02px;color:#23262f;">379.17</span>
<span style="left:1411.0px;top:399px;font-size:11px;line-height:13px;letter-spacing:-0.11px;color:#23262f;">Centrinis</span>
<div class="badge" style="left:1524.0px;top:394.0px;width:89.0px;height:22.8px;"></div>
<span style="left:1535.2px;top:399px;font-size:11px;line-height:13px;letter-spacing:-0.21px;color:#2d5d8c;">Naujas</span>
<div style="left:250px;top:419.5px;width:1548px;height:29.2px">
</div>
<div class="rl" style="left:250.0px;top:448.2px;width:1548.0px;height:1.0px;"></div>
<div class="vl" style="left:428.7px;top:419.5px;width:1.0px;height:29.2px;"></div>
<div class="vl" style="left:676.1px;top:419.5px;width:1.0px;height:29.2px;"></div>
<div class="vl" style="left:787.9px;top:419.5px;width:1.0px;height:29.2px;"></div>
<div class="vl" style="left:864.9px;top:419.5px;width:1.0px;height:29.2px;"></div>
<div class="vl" style="left:976.9px;top:419.5px;width:1.0px;height:29.2px;"></div>
<div class="vl" style="left:1058.1px;top:419.5px;width:1.0px;height:29.2px;"></div>
<div class="vl" style="left:1169.9px;top:419.5px;width:1.0px;height:29.2px;"></div>
<div class="vl" style="left:1282.9px;top:419.5px;width:1.0px;height:29.2px;"></div>
<div class="vl" style="left:1394.9px;top:419.5px;width:1.0px;height:29.2px;"></div>
<div class="vl" style="left:1508.0px;top:419.5px;width:1.0px;height:29.2px;"></div>
<div class="vl" style="left:1619.8px;top:419.5px;width:1.0px;height:29.2px;"></div>
<div class="vl" style="left:1732.9px;top:419.5px;width:1.0px;height:29.2px;"></div>
<div style="left:249.8px;top:419.5px;width:3.0px;height:29.4px;background:#ff1c2c"></div>
<div class="cb" style="left:270.2px;top:428.4px;width:11.6px;height:11.6px;"></div>
<svg style="left:304.3px;top:430.7px;" width="3" height="10" viewBox="0 0 3 10" fill="none"><circle cx="1.5" cy="1.1" r=".95" fill="#222"/><circle cx="1.5" cy="4.8" r=".95" fill="#222"/><circle cx="1.5" cy="8.5" r=".95" fill="#222"/></svg>
<span style="left:332.6px;top:428px;font-size:11px;line-height:13px;letter-spacing:-0.30px;color:#23262f;transform:scaleX(0.992);transform-origin:0 50%;">M100</span>
<div style="left:440px;top:419px;width:212.6px;height:29px;overflow:hidden">
<span style="left:5.1px;top:9px;font-size:11px;line-height:13px;letter-spacing:0.05px;color:#23262f;">Darbdavio sodra</span>
</div>
<span style="left:692.3px;top:428px;font-size:11px;line-height:13px;letter-spacing:-0.16px;color:#f01d2d;">Įmonės mokesčiai</span>
<span style="left:804.5px;top:428px;font-size:11px;line-height:13px;letter-spacing:0.27px;color:#23262f;">006</span>
<span style="left:880.8px;top:428px;font-size:11px;line-height:13px;letter-spacing:-0.30px;color:#23262f;transform:scaleX(0.980);transform-origin:0 50%;">2025 Rugsėjis</span>
<div style="left:1070px;top:419px;width:77.5px;height:29px;overflow:hidden">
<span style="left:3.8px;top:9px;font-size:11px;line-height:13px;letter-spacing:-0.08px;color:#23262f;">Darbdavio sodra</span>
</div>
<span style="left:1360.0px;top:428px;font-size:11px;line-height:13px;letter-spacing:-0.02px;color:#23262f;">34.42</span>
<span style="left:1411.0px;top:428px;font-size:11px;line-height:13px;letter-spacing:-0.11px;color:#23262f;">Centrinis</span>
<div class="badge" style="left:1524.0px;top:422.8px;width:89.0px;height:22.8px;"></div>
<span style="left:1535.2px;top:428px;font-size:11px;line-height:13px;letter-spacing:-0.21px;color:#2d5d8c;">Naujas</span>
<svg style="left:1717.0px;top:313.4px;" width="8.5" height="8" viewBox="0 0 8.5 8" fill="none"><path d="M.3 1h7.9M.3 4h7.9M.3 7h7.9" stroke="#c4c4c8" stroke-width=".9"/></svg>
<svg style="left:0;top:0" width="1812" height="514"><rect x="252.1" y="273.5" width="1032.6" height="61" rx="1.5" fill="none" stroke="#f6813a" stroke-width="2.4"/></svg>
<div style="left:250.0px;top:457.0px;width:1548.0px;height:15.0px;background:#f8f8f8"></div>
<svg style="left:259.0px;top:460.1px;" width="5.6" height="9" viewBox="0 0 5.6 9" fill="none"><path d="M5.4.2v8.6L.3 4.5z" fill="#8a8a8a"/></svg>
<svg style="left:1783.6px;top:460.1px;" width="5.6" height="9" viewBox="0 0 5.6 9" fill="none"><path d="M.2.2v8.6L5.3 4.5z" fill="#8a8a8a"/></svg>
<div style="left:273.0px;top:460.3px;width:1136.0px;height:8.5px;background:#8b8b8b;border-radius:4.3px"></div>
<svg style="left:261.8px;top:483.2px;" width="10" height="10" viewBox="0 0 10 10" fill="none"><circle cx="5" cy="5" r="4.3" stroke="#222" stroke-width="1.1"/><circle cx="5" cy="5" r="1.7" fill="#222"/></svg>
<a style="left:278.3px;top:482px;font-size:10.5px;line-height:13px;letter-spacing:0.16px;color:#1d1f27;">Pridėti eilutę</a>
</section>
</main>
</body>
</html>
